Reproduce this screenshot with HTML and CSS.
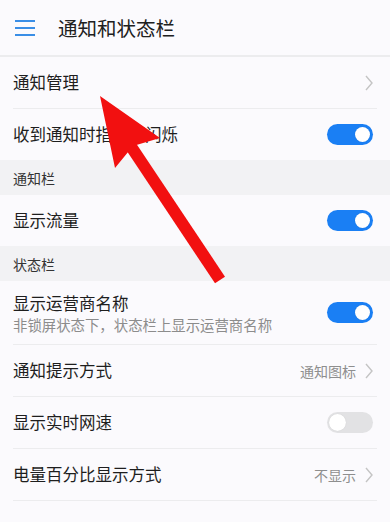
FILE: index.html
```html
<!DOCTYPE html>
<html lang="zh-CN">
<head>
<meta charset="utf-8">
<title>通知和状态栏</title>
<link rel="stylesheet" href="styles.css">
</head>
<body>
<div class="page">
  <header class="topbar">
    <svg class="menu" width="20" height="16" viewBox="0 0 20 16"><path d="M0 1h20M0 8h20M0 15h20" stroke="#3a8ee6" stroke-width="2"/></svg>
    <h1 class="title">通知和状态栏</h1>
  </header>
  <main class="list">
    <div class="row"><span class="label">通知管理</span><span class="trail"><svg class="chev" width="8" height="16" viewBox="0 0 8 16"><path d="M1 1l6 7-6 7" fill="none" stroke="#c4c4c4" stroke-width="1.4"/></svg></span></div>
    <div class="row last"><span class="label">收到通知时指示灯闪烁</span><span class="toggle on"></span></div>
    <div class="section">通知栏</div>
    <div class="row last"><span class="label">显示流量</span><span class="toggle on"></span></div>
    <div class="section">状态栏</div>
    <div class="row tall"><span class="stack"><span class="label">显示运营商名称</span><span class="sub">非锁屏状态下，状态栏上显示运营商名称</span></span><span class="toggle on"></span></div>
    <div class="row"><span class="label">通知提示方式</span><span class="trail"><span class="value">通知图标</span><svg class="chev" width="8" height="16" viewBox="0 0 8 16"><path d="M1 1l6 7-6 7" fill="none" stroke="#c4c4c4" stroke-width="1.4"/></svg></span></div>
    <div class="row"><span class="label">显示实时网速</span><span class="toggle"></span></div>
    <div class="row"><span class="label">电量百分比显示方式</span><span class="trail"><span class="value">不显示</span><svg class="chev" width="8" height="16" viewBox="0 0 8 16"><path d="M1 1l6 7-6 7" fill="none" stroke="#c4c4c4" stroke-width="1.4"/></svg></span></div>
  </main>
  <svg class="arrow" width="390" height="522" viewBox="0 0 390 522">
    <line x1="128" y1="142" x2="220" y2="280" stroke="#f21010" stroke-width="12" stroke-linecap="butt"/>
    <polygon points="100,96 160,138 133,146 115,168" fill="#f21010"/>
  </svg>
</div>
</body>
</html>
```
FILE: styles.css
```css
* { box-sizing: border-box; }
html, body { margin: 0; padding: 0; }
body {
  background: #fbfafd;
  font-family: "Noto Sans CJK SC", "Noto Sans", sans-serif;
  color: #1e1e1e;
  width: 390px;
  height: 522px;
  overflow: hidden;
}
.page { position: relative; width: 390px; height: 522px; }
.topbar {
  height: 57px;
  display: flex;
  align-items: center;
  padding: 0 0 0 15px;
  border-bottom: 2px solid #ececee;
}
.menu { flex: none; }
.title {
  margin: 0 0 0 23px;
  font-size: 19.5px;
  font-weight: 400;
  color: #202020;
  line-height: 1;
}
.list { display: flex; flex-direction: column; }
.row {
  margin: 0 13px;
  height: 52px;
  display: flex;
  align-items: center;
  justify-content: space-between;
  border-bottom: 1px solid #ececee;
}
.row.last { border-bottom: none; height: 51px; }
.row.tall { height: 64px; }
.label { font-size: 16.5px; line-height: 1; }
.stack { display: flex; flex-direction: column; gap: 6px; padding-top: 2px; }
.sub { font-size: 14.4px; color: #8c8c8c; line-height: 1; }
.trail { display: flex; align-items: center; gap: 9px; padding-right: 4px; }
.value { font-size: 14px; color: #8e8e8e; line-height: 1; }
.section {
  background: #f2f2f4;
  height: 35px;
  padding: 0 13px;
  display: flex;
  align-items: center;
  font-size: 14px;
  color: #333;
}
.toggle {
  flex: none;
  width: 46px;
  height: 21px;
  border-radius: 11px;
  background: #e2e2e4;
  position: relative;
  margin-right: 4px;
}
.toggle::after {
  content: "";
  position: absolute;
  top: 2px;
  left: 2px;
  width: 17px;
  height: 17px;
  border-radius: 50%;
  background: #fff;
  box-shadow: 0 0 1px rgba(0,0,0,0.15);
}
.toggle.on { background: #1a7ff4; }
.toggle.on::after { left: auto; right: 3px; top: 3px; width: 15px; height: 15px; }
.arrow { position: absolute; left: 0; top: 0; pointer-events: none; }
```
